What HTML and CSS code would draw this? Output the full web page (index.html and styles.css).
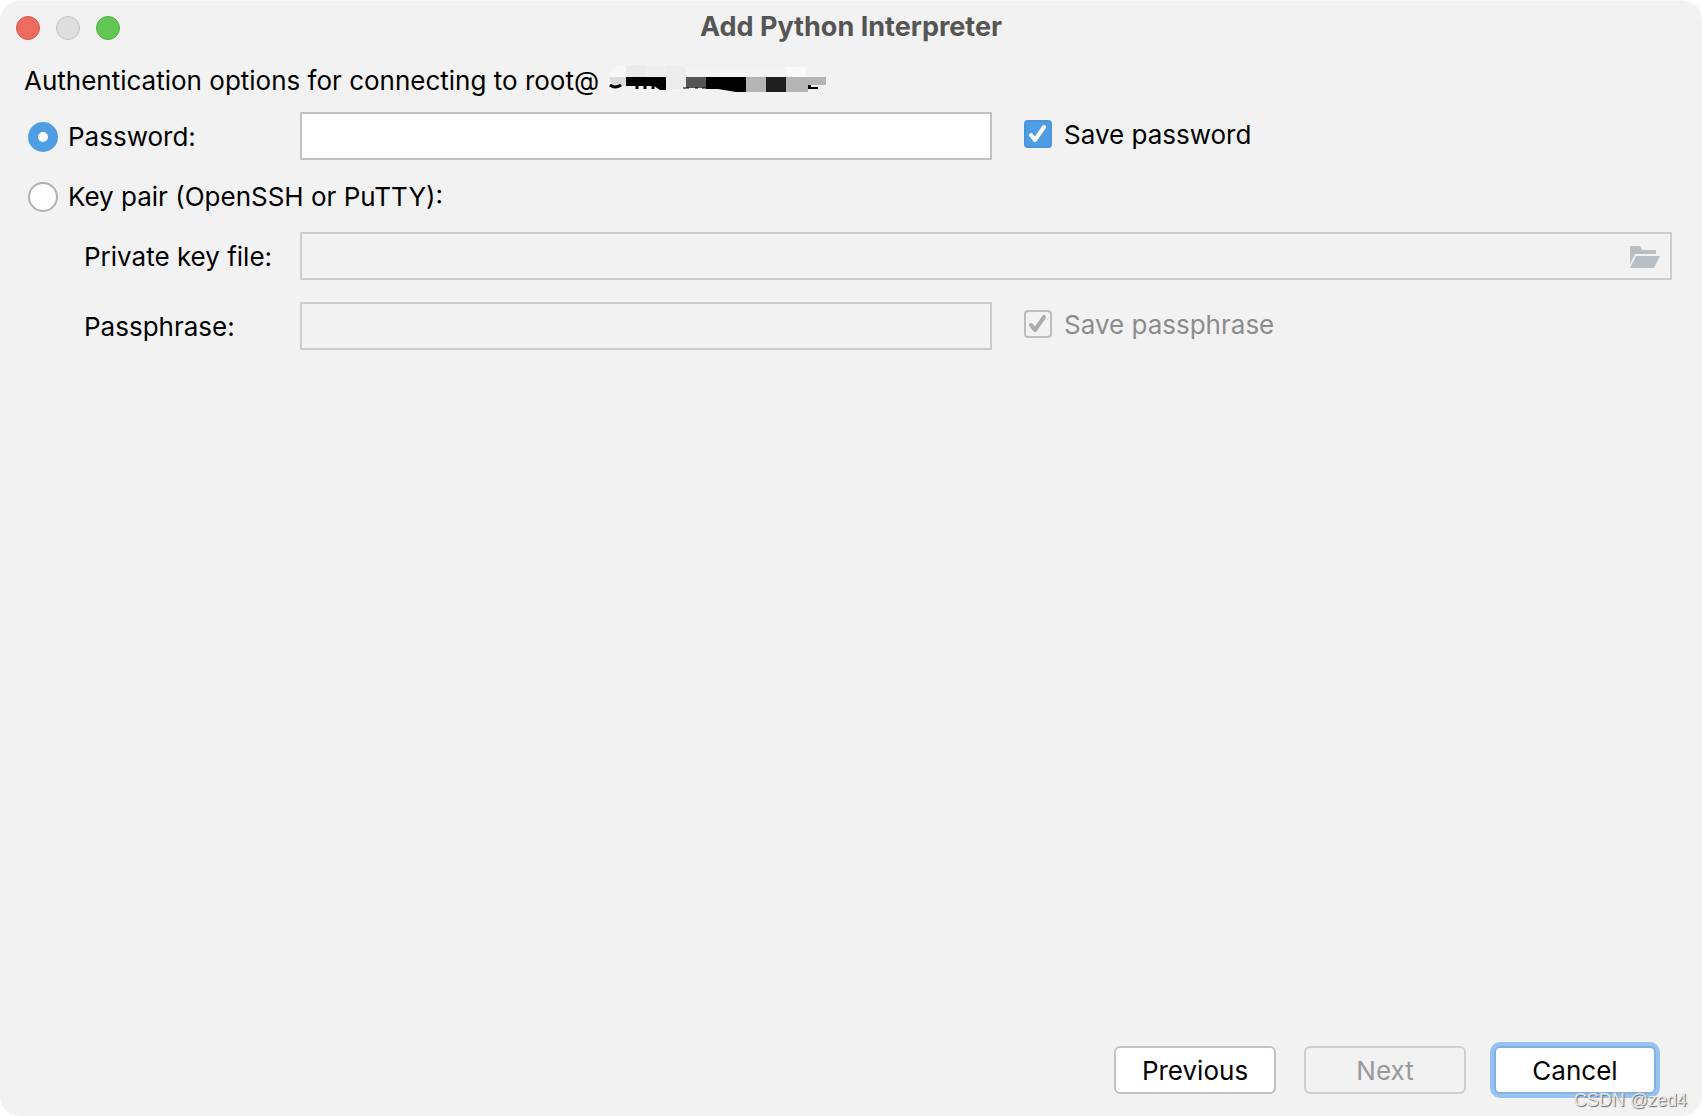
FILE: index.html
```html
<!DOCTYPE html>
<html lang="en">
<head>
    <meta charset="UTF-8">
    <title>Add Python Interpreter</title>
    <link rel="stylesheet" href="styles.css">
</head>
<body>
<div class="dialog">
    <header class="titlebar">
        <div class="lights">
            <button class="light red" aria-label="Close"></button>
            <button class="light gray" aria-label="Minimize" disabled></button>
            <button class="light green" aria-label="Zoom"></button>
        </div>
        <h1>Add Python Interpreter</h1>
    </header>
    <p class="intro">
        <span>Authentication options for connecting to root@</span>
        <svg width="220" height="30" viewBox="0 0 220 30" aria-hidden="true">
            <path fill="#f8f8f8" d="M2 12q2-12 17-12v12z"/>
            <path fill="#ebebeb" d="M19 0h20v12h-20z"/>
            <path fill="#efefef" d="M39 1h20v11h-20z"/>
            <path fill="#f4f4f4" d="M79 2h100v10h-100z"/>
            <path fill="#ececec" d="M59 0l12 1 8 2v21h-20z"/>
            <path fill="#f9f9f9" d="M179 2h20v10h-20z"/>
            <path fill="#dadada" d="M2 12h17v9h-13z"/>
            <path fill="#000" d="M19 12h40v13h-6l-6-4h-28z"/>
            <path fill="none" stroke="#000" stroke-width="3" d="M3 20q5 4 11 0M30 21v3M38 21v3M46 21v3"/>
            <path fill="#555" d="M79 12h20v11h-20z"/>
            <path fill="none" stroke="#000" stroke-width="1" d="M76 23h6M88 23h3M95 23h4"/>
            <path fill="#000" d="M99 12h40v15h-10l-18-3h-12z"/>
            <path fill="#b4b4b4" d="M139 12h20v15h-20zM179 12h40v8h-18v7h-22z"/>
            <path fill="#1f1f1f" d="M159 12h20v15h-20z"/>
            <path fill="#000" d="M201 20h3v2h7v2h-10z"/>
        </svg>
    </p>
    <form class="form">
        <div class="label">
            <input type="radio" name="auth" id="password" checked>
            <label for="password">Password:</label>
        </div>
        <input class="field" type="password" aria-label="Password">
        <div class="save">
            <input type="checkbox" id="savePwd" checked>
            <label for="savePwd">Save password</label>
        </div>

        <div class="label pair">
            <input type="radio" name="auth" id="keyPair">
            <label for="keyPair">Key pair (OpenSSH or PuTTY):</label>
        </div>

        <label class="sub" for="keyFile">Private key file:</label>
        <div class="field file">
            <input type="text" id="keyFile" disabled>
            <button type="button" class="browse" aria-label="Browse" disabled>
                <svg width="30" height="22" viewBox="0 0 30 22" fill="#b8bec2">
                    <path d="M0 0h10l2 4h14v4H5L0 18z"/>
                    <path d="M6 10h24l-6 12H0z"/>
                </svg>
            </button>
        </div>

        <label class="sub" for="passphrase">Passphrase:</label>
        <input class="field" type="password" id="passphrase" disabled>
        <div class="save">
            <input type="checkbox" id="savePhrase" checked disabled>
            <label for="savePhrase">Save passphrase</label>
        </div>
    </form>
    <footer class="buttons">
        <button class="btn">Previous</button>
        <button class="btn" disabled>Next</button>
        <button class="btn focused">Cancel</button>
    </footer>
    <span class="watermark">CSDN @zed4</span>
</div>
</body>
</html>
```
FILE: styles.css
```css
* {
    margin: 0;
    padding: 0;
    box-sizing: border-box;
}
body {
    background-color: #fff;
    font: 26px/32px Inter, "Liberation Sans", sans-serif;
    color: #000;
}
button, input {
    font: inherit;
    color: inherit;
}
.dialog {
    display: flex;
    flex-direction: column;
    min-height: 100vh;
    position: relative;
    background-color: #f2f2f2;
    border-top: 1px solid #f8f8f8;
    border-radius: 20px;
}

/* title bar */
.titlebar {
    display: grid;
    grid-template-columns: 1fr auto 1fr;
    align-items: center;
    height: 54px;
    padding: 0 16px;
}
.titlebar h1 {
    padding-bottom: 2px;
    font-size: 27px;
    font-weight: 700;
    color: #555;
}
.lights {
    display: flex;
    gap: 16px;
}
.light {
    width: 24px;
    height: 24px;
    border: 1px solid;
    border-radius: 50%;
}
.red {
    background-color: #ed6b5f;
    border-color: #d9564b;
}
.gray {
    background-color: #dedede;
    border-color: #c4c4c4;
}
.green {
    background-color: #62c655;
    border-color: #50aa43;
}

/* content */
.intro {
    display: flex;
    gap: 8px;
    padding: 10px 24px 15px;
}
.form {
    display: grid;
    grid-template-columns: 272px 692fr 680fr;
    grid-template-rows: 48px 28px 48px 48px;
    row-gap: 22px;
    align-items: center;
    padding: 0 30px 0 28px;
}
.label, .save {
    display: flex;
    align-items: center;
}
.label {
    gap: 10px;
    padding-top: 2px;
}
.save {
    gap: 12px;
    padding: 0 0 4px 32px;
}
.save label {
    padding-top: 2px;
}
.pair {
    grid-column: 1 / -1;
}
.sub {
    grid-column: 1;
    padding: 2px 0 0 56px;
}
.field {
    width: 100%;
    height: 48px;
    padding: 0 10px;
    background-color: #fff;
    border: 2px solid #c2c2c2;
    outline: 0;
}
.field:disabled, .file {
    background-color: #f2f2f2;
    border-color: #cdcdcd;
}
.file {
    grid-column: 2 / -1;
    display: flex;
    align-items: center;
}
.file input {
    flex: 1;
    border: 0;
    background: none;
}
.browse {
    display: flex;
    padding-top: 2px;
    border: 0;
    background: none;
}
input[type=radio], input[type=checkbox] {
    appearance: none;
    flex: none;
    background: #fff center no-repeat;
    border: 2px solid #b0b0b0;
}
input[type=radio] {
    width: 30px;
    height: 30px;
    border-radius: 50%;
}
input[type=radio]:checked {
    background: #fff;
    border: 10px solid #4f9de3;
}
input[type=checkbox] {
    width: 28px;
    height: 28px;
    border-radius: 4px;
    background-color: #4f9de3;
    background-image: url("data:image/svg+xml,%3Csvg xmlns='http://www.w3.org/2000/svg' width='24' height='24' fill='none' stroke='white' stroke-width='4' stroke-linecap='round' stroke-linejoin='round'%3E%3Cpath d='M5 13l4 5L18 5'/%3E%3C/svg%3E");
    border-color: #4a94d9;
}
input[type=checkbox]:disabled {
    background-color: #f2f2f2;
    background-image: url("data:image/svg+xml,%3Csvg xmlns='http://www.w3.org/2000/svg' width='24' height='24' fill='none' stroke='%23ababab' stroke-width='4' stroke-linecap='round' stroke-linejoin='round'%3E%3Cpath d='M5 13l4 5L18 5'/%3E%3C/svg%3E");
    border-color: #bdbdbd;
}
input:disabled + label {
    color: #8c8c8c;
}

/* bottom buttons */
.buttons {
    display: flex;
    justify-content: flex-end;
    gap: 28px;
    margin-top: auto;
    padding: 0 46px 22px;
}
.btn {
    width: 162px;
    height: 48px;
    padding-top: 2px;
    background-color: #fff;
    border: 2px solid #c2c2c2;
    border-radius: 6px;
}
.btn:disabled {
    background-color: #f2f2f2;
    border-color: #cfcfcf;
    color: #999;
}
.focused {
    border-color: #87afda;
    box-shadow: 0 0 0 4px #97c3f3;
}
.watermark {
    position: absolute;
    right: 15px;
    bottom: 5px;
    font: 18px/22px "Liberation Sans", sans-serif;
    color: #e8e8e8;
    text-shadow: 1px 1px 1px #666;
}
```
